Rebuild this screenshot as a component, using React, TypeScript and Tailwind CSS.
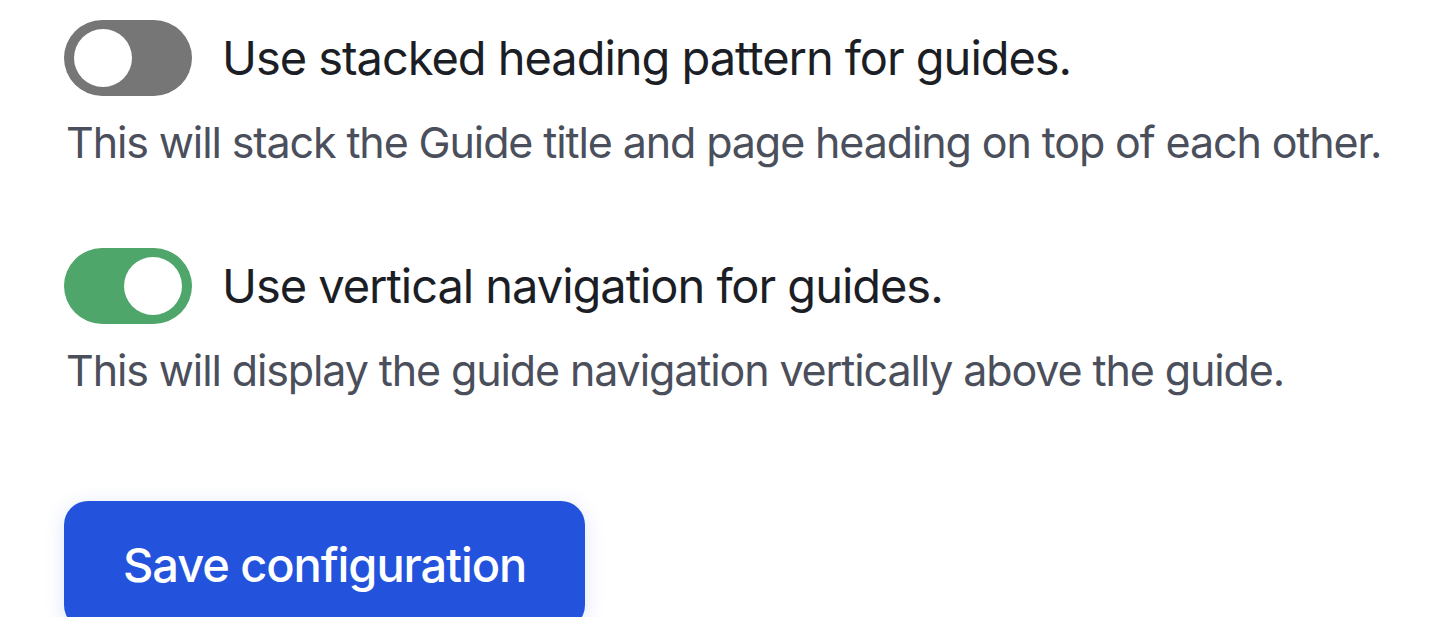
import { useState } from 'react';

type ToggleProps = {
  checked: boolean;
  onChange: (value: boolean) => void;
};

function Toggle({ checked, onChange }: ToggleProps) {
  return (
    <button
      type="button"
      role="switch"
      aria-checked={checked}
      onClick={() => onChange(!checked)}
      className={`flex h-[76px] w-[128px] shrink-0 items-center rounded-full px-[10px] transition ${checked ? 'justify-end bg-[#4fa66b]' : 'justify-start bg-[#767676]'}`}
    >
      <span className="block h-[58px] w-[58px] rounded-full bg-white" />
    </button>
  );
}

const settings = [
  {
    id: 'stacked',
    label: 'Use stacked heading pattern for guides.',
    help: 'This will stack the Guide title and page heading on top of each other.',
    initial: false,
  },
  {
    id: 'vertical',
    label: 'Use vertical navigation for guides.',
    help: 'This will display the guide navigation vertically above the guide.',
    initial: true,
  },
];

export default function App() {
  const [values, setValues] = useState<Record<string, boolean>>(
    Object.fromEntries(settings.map((s) => [s.id, s.initial])),
  );

  return (
    <div className="h-[617px] overflow-hidden bg-white pl-[64px] pt-[20px] font-['Inter',sans-serif]">
      <div className="flex flex-col gap-[82px]">
        {settings.map((setting) => (
          <div key={setting.id}>
            <div className="flex items-center gap-[30px]">
              <Toggle
                checked={values[setting.id]}
                onChange={(v) => setValues((prev) => ({ ...prev, [setting.id]: v }))}
              />
              <span className="whitespace-nowrap text-[47px] leading-[52px] tracking-[-0.022em] text-[#1c1e26]">
                {setting.label}
              </span>
            </div>
            <p className="mt-[22px] whitespace-nowrap pl-[2px] text-[43px] leading-[48px] tracking-[-0.026em] text-[#4b4f5c]">
              {setting.help}
            </p>
          </div>
        ))}
      </div>
      <button
        type="button"
        className="mt-[107px] h-[128px] rounded-[24px] bg-[#2353dd] px-[59px] text-[47px] font-medium tracking-[-0.023em] text-white shadow-[0_4px_20px_rgba(35,83,221,0.15)]"
      >
        Save configuration
      </button>
    </div>
  );
}
